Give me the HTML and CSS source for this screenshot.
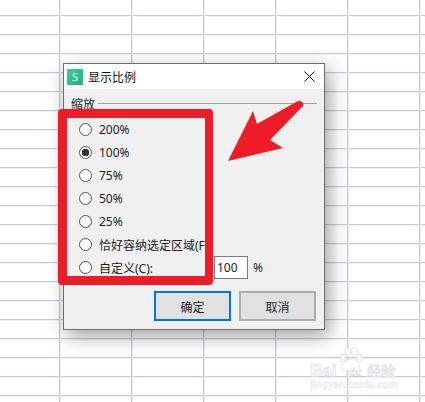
FILE: index.html
```html
<!DOCTYPE html>
<html lang="zh">
<head>
<meta charset="utf-8">
<title>显示比例</title>
<link rel="stylesheet" href="styles.css">
</head>
<body>
<main class="sheet">
  <section class="dialog">
    <header class="titlebar">
      <span class="app-icon">S</span>
      <span class="title">显示比例</span>
      <svg class="close" viewBox="0 0 11 11" width="11" height="11"><path d="M.5.5l10 10M10.5.5l-10 10" fill="none" stroke="#111" stroke-width="1"/></svg>
    </header>
    <div class="body">
      <div class="legend"><span class="legend-text">缩放</span><span class="legend-line"></span></div>
      <ul class="options">
        <li class="option"><span class="radio"></span><span>200%</span></li>
        <li class="option"><span class="radio checked"></span><span>100%</span></li>
        <li class="option"><span class="radio"></span><span>75%</span></li>
        <li class="option"><span class="radio"></span><span>50%</span></li>
        <li class="option"><span class="radio"></span><span>25%</span></li>
        <li class="option"><span class="radio"></span><span>恰好容纳选定区域(F)</span></li>
        <li class="option"><span class="radio"></span><span class="custom-label">自定义(C):</span><span class="field">100</span><span class="unit">%</span></li>
      </ul>
      <div class="actions">
        <button class="btn primary">确定</button>
        <button class="btn">取消</button>
      </div>
    </div>
  </section>

  <div class="red-frame"></div>
  <svg class="arrow" viewBox="0 0 425 402" width="425" height="402">
    <path d="M228 161L253 111L257 124L297 101.500Q301 100 303 103Q304 106 301 108L270 140L283 148Z" fill="#ee1c27"/>
  </svg>

  <div class="watermark">
    <svg class="paw" viewBox="0 0 24 26" width="24" height="26">
      <g fill="#fff" stroke="#e2e2e6" stroke-width="1">
        <ellipse cx="4" cy="11" rx="2.800" ry="3.800"/>
        <ellipse cx="9" cy="5" rx="2.800" ry="4.200"/>
        <ellipse cx="15.500" cy="5" rx="2.800" ry="4.200"/>
        <ellipse cx="20.500" cy="11" rx="2.800" ry="3.800"/>
        <path d="M12 11c3 0 9 5 8.500 10s-5 4-8.500 3-5.500 1.500-8-.5-1.500-8 8-12.500z"/>
      </g>
    </svg>
    <div class="wm-brand"><span class="wm-bai">Bai</span><span class="wm-du">du</span><span class="wm-jy">经验</span></div>
    <div class="wm-url">jingyan.baidu.com</div>
  </div>
</main>
</body>
</html>
```
FILE: styles.css
```css
* { box-sizing: border-box; }
html, body { margin: 0; padding: 0; }
body { width: 425px; height: 402px; overflow: hidden; background: #fff; }

.sheet {
  position: relative;
  width: 425px;
  height: 402px;
  overflow: hidden;
  padding: 63px 0 0 63px;
  font-family: "Noto Sans", "Noto Sans CJK SC", sans-serif;
  font-size: 12px;
  color: #1c1c1c;
  background-color: #fff;
  background-image:
    linear-gradient(to right, #c4c9dc 1px, #eef0f5 1px, #eef0f5 2px, transparent 2px),
    linear-gradient(to bottom, #c4c9dc 1px, #f2f3f7 1px, #f2f3f7 2px, transparent 2px);
  background-size: 72px 19px;
  background-position: 59px 15px;
}

.dialog {
  width: 262px;
  height: 267px;
  border: 1px solid #6d6d6d;
  background: #f0f0f0;
  box-shadow: 4px 6px 18px rgba(0, 0, 0, .38);
}

.titlebar {
  display: flex;
  align-items: center;
  height: 25px;
  padding: 0 9px 0 3px;
  background: #fff;
}
.app-icon {
  width: 16px;
  height: 16px;
  margin-right: 5px;
  border-radius: 1px;
  background: linear-gradient(135deg, #38cf97, #24b27e);
  color: #fff;
  font: 400 11px/16px "Open Sans", sans-serif;
  text-align: center;
}
.title {
  flex: 1;
  font-family: "Noto Sans CJK SC", sans-serif;
  font-size: 12px;
  color: #111;
}

.body { padding: 6px 7px 0 7px; }
.legend { display: flex; align-items: center; height: 16px; }
.legend-text { font-family: "Noto Sans CJK SC", sans-serif; margin-right: 3px; }
.legend-line { flex: 1; height: 1px; background: #a0a0a0; }

.options {
  list-style: none;
  margin: 7px 0 0 8px;
  padding: 0;
}
.option {
  display: flex;
  align-items: center;
  height: 23px;
  white-space: nowrap;
}
.radio {
  flex: none;
  width: 13px;
  height: 13px;
  margin-right: 7px;
  border: 1px solid #555;
  border-radius: 50%;
  background: #fff;
}
.radio.checked {
  background: radial-gradient(circle, #333 0 3.500px, #fff 4px);
}
.custom-label { width: 115px; }
.field {
  width: 34px;
  height: 23px;
  padding-left: 2px;
  margin-right: 5px;
  border: 1px solid #7a7a7a;
  background: #fff;
  line-height: 21px;
}

.actions {
  display: flex;
  gap: 8px;
  margin: 12px 0 0 83px;
}
.btn {
  width: 77px;
  height: 30px;
  padding: 0;
  border: 2px solid #adadad;
  background: #e1e1e1;
  color: #1c1c1c;
  font-family: "Noto Sans CJK SC", sans-serif;
  font-size: 12px;
}
.btn.primary { border-color: #0078d7; }

.red-frame {
  position: absolute;
  left: 58px;
  top: 109px;
  width: 155px;
  height: 176px;
  border: 9px solid #ee1c27;
  border-right-width: 8px;
  border-radius: 4px;
}
.arrow { position: absolute; left: 0; top: 0; }

.watermark {
  position: absolute;
  left: 310px;
  top: 347px;
  width: 90px;
  height: 44px;
  color: #fff;
  font-family: "Liberation Sans", sans-serif;
}
.paw { position: absolute; left: 29px; top: 0; }
.wm-brand {
  position: absolute;
  left: 0;
  top: 13px;
  display: flex;
  align-items: baseline;
  font-size: 17px;
  font-weight: bold;
  line-height: 20px;
  -webkit-text-stroke: 1px #e6e6ea;
}
.wm-bai { width: 34px; }
.wm-du { width: 23px; font-size: 10px; text-align: center; -webkit-text-stroke: .5px #d4d4d8; }
.wm-jy { font-family: "Noto Sans CJK SC", sans-serif; font-size: 14px; font-weight: normal; }
.wm-url {
  position: absolute;
  left: 0;
  top: 32px;
  font-size: 10px;
  font-weight: bold;
  color: #f6f6f8;
  -webkit-text-stroke: .4px #e8e8ec;
}
```
